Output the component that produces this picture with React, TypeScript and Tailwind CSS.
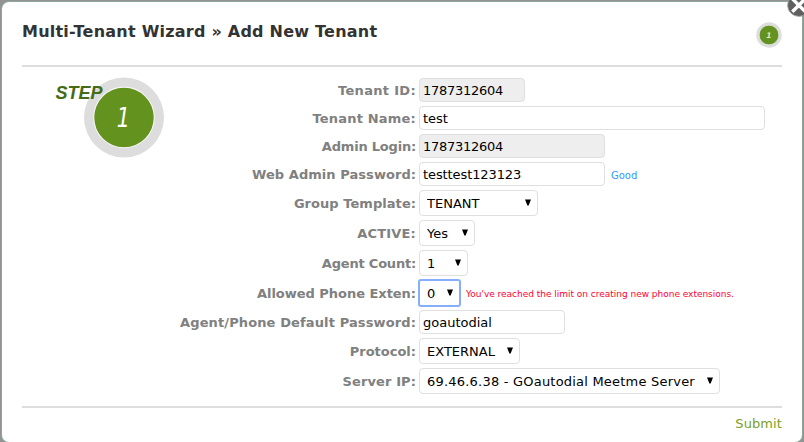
import type { ReactNode } from 'react'

type Field = {
  label: string
  value: string
  kind: 'input' | 'readonly' | 'select' | 'focused'
  width: string
  labelClass?: string
  textClass?: string
  note?: ReactNode
}

const fields: Field[] = [
  { label: 'Tenant ID:', value: '1787312604', kind: 'readonly', width: 'w-[106px]', labelClass: 'tracking-[0.32px]', textClass: 'tracking-[-0.27px]' },
  { label: 'Tenant Name:', value: 'test', kind: 'input', width: 'w-[346px]', labelClass: 'tracking-[0.2px]' },
  { label: 'Admin Login:', value: '1787312604', kind: 'readonly', width: 'w-[186px]', labelClass: 'tracking-[-0.2px]', textClass: 'tracking-[-0.27px]' },
  {
    label: 'Web Admin Password:',
    value: 'testtest123123',
    kind: 'input',
    width: 'w-[186px]',
    labelClass: 'tracking-[0.05px]',
    textClass: 'tracking-[-0.1px]',
    note: <span className="ml-1.5 pt-[3px] text-[10px] leading-none text-[#3399ff]">Good</span>,
  },
  { label: 'Group Template:', value: 'TENANT', kind: 'select', width: 'w-[119px]', labelClass: 'tracking-[0.05px]' },
  { label: 'ACTIVE:', value: 'Yes', kind: 'select', width: 'w-[56px]', labelClass: 'tracking-[0.2px]' },
  { label: 'Agent Count:', value: '1', kind: 'select', width: 'w-[49px]', labelClass: 'tracking-[-0.2px]' },
  {
    label: 'Allowed Phone Exten:',
    value: '0',
    kind: 'focused',
    width: 'w-[41px]',
    labelClass: 'tracking-[-0.03px]',
    note: (
      <span className="ml-1.5 pt-[3px] text-[9px] leading-none tracking-[-0.02px] whitespace-nowrap text-[#ff0033]">
        You've reached the limit on creating new phone extensions.
      </span>
    ),
  },
  { label: 'Agent/Phone Default Password:', value: 'goautodial', kind: 'input', width: 'w-[146px]', labelClass: 'tracking-[0.12px]' },
  { label: 'Protocol:', value: 'EXTERNAL', kind: 'select', width: 'w-[101px]' },
  {
    label: 'Server IP:',
    value: '69.46.6.38 - GOautodial Meetme Server',
    kind: 'select',
    width: 'w-[301px]',
    labelClass: 'tracking-[0.1px]',
    textClass: 'tracking-[0.21px]',
  },
]

function Control({ field }: { field: Field }) {
  const { kind, value, width, textClass = '' } = field

  if (kind === 'input' || kind === 'readonly') {
    return (
      <input
        defaultValue={value}
        readOnly={kind === 'readonly'}
        className={`h-6 shrink-0 rounded-[4px] border border-[#dfdfdf] px-[3px] text-[13px] text-black outline-none ${width} ${textClass} ${kind === 'readonly' ? 'bg-[#eeeeee]' : 'bg-white'}`}
      />
    )
  }

  return (
    <div className={`relative h-[26px] shrink-0 ${width}`}>
      <select
        defaultValue={value}
        className={`h-full w-full appearance-none border bg-white pt-0.5 pl-[7px] text-[13px] text-black outline-none ${textClass} ${kind === 'focused' ? 'rounded-[2px] border-[#86aefa] ring-1 ring-[#86aefa]' : 'rounded-[4px] border-[#dfdfdf]'}`}
      >
        <option>{value}</option>
      </select>
      <svg className="pointer-events-none absolute top-[9px] right-[7px] h-[7px] w-[6px]" viewBox="0 0 6 7">
        <path d="M0 0.5h6L3.6 6.5H2.4z" fill="#000" />
      </svg>
    </div>
  )
}

export default function App() {
  return (
    <div className="relative h-[442px] w-[804px] overflow-hidden bg-[#939393] pt-0.5 pl-0.5 font-['DejaVu_Sans',sans-serif]">
      <div className="flex h-[440px] w-[800px] flex-col rounded-[7px] bg-white px-5 shadow-[0_0_0_1px_#8da89b]">
        <header className="flex h-[65px] shrink-0 items-start justify-between border-b-2 border-[#dddddd]">
          <h1 className="pt-[19px] text-[16px] leading-[22px] font-bold tracking-[0.23px] text-[#333333]">
            Multi-Tenant Wizard » Add New Tenant
          </h1>
          <svg className="mt-5 h-[26px] w-[26px]" viewBox="0 0 26 26">
            <circle cx="13" cy="13" r="12.7" fill="#dddddd" />
            <circle cx="13" cy="13" r="9.8" fill="#649220" stroke="#eeeeee" strokeWidth="0.6" />
            <text x="12.8" y="15.7" textAnchor="middle" fontSize="7.5" fontStyle="italic" fontWeight="bold" fill="#dcebc6" fontFamily="DejaVu Sans">1</text>
          </svg>
        </header>

        <main className="flex pt-[9px]">
          <svg className="ml-8 h-[84px] w-[112px] shrink-0" viewBox="0 0 112 84">
            <circle cx="70" cy="41.5" r="40" fill="#dddddd" />
            <circle cx="70" cy="41.5" r="30.3" fill="#64921f" stroke="#f3f3f3" strokeWidth="1.2" />
            <text x="1.6" y="23" fontFamily="Liberation Sans" fontSize="19" fontStyle="italic" fontWeight="bold" fill="#456b16" textLength="47" lengthAdjust="spacingAndGlyphs">STEP</text>
            <text x="62.8" y="51" fontFamily="DejaVu Sans" fontSize="27" fontStyle="italic" fill="#ffffff" textLength="13.2" lengthAdjust="spacingAndGlyphs">1</text>
          </svg>
          <div className="flex flex-col gap-1 pt-0.5">
            {fields.map((field) => (
              <div key={field.label} className="flex items-center">
                <label className={`w-[250px] shrink-0 pt-0.5 text-right text-[13px] leading-5 font-bold whitespace-nowrap text-[#808080] ${field.labelClass ?? ''}`}>
                  {field.label}
                </label>
                <div className="ml-[3px] flex items-center">
                  <Control field={field} />
                  {field.note}
                </div>
              </div>
            ))}
          </div>
        </main>

        <footer className="mt-3 flex justify-end border-t-2 border-[#dddddd] pt-1.5">
          <a href="#" className="text-[13px] leading-5 tracking-[0.1px] text-[#7a9e22]">Submit</a>
        </footer>
      </div>

      <svg className="absolute -top-2 left-[786px] h-[26px] w-[26px]" viewBox="0 0 26 26">
        <circle cx="12.8" cy="13.2" r="11.2" fill="#606060" stroke="#aaaaaa" strokeWidth="0.8" />
        <path d="M6.3 6.7l13 13M19.3 6.7l-13 13" stroke="#ffffff" strokeWidth="3.4" />
      </svg>
    </div>
  )
}
